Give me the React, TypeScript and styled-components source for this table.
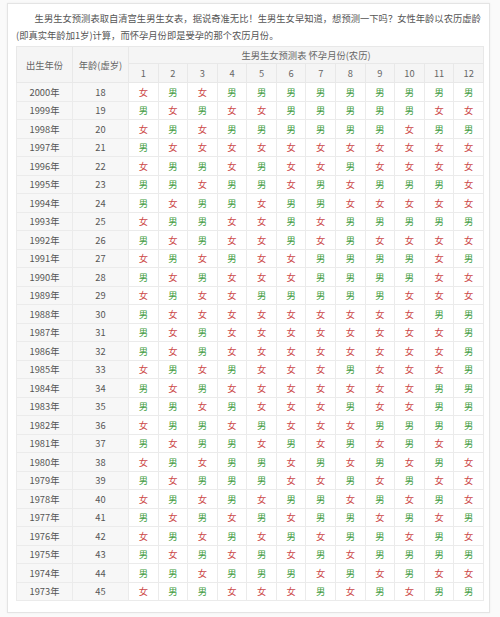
import React from 'react';
import styled, { createGlobalStyle } from 'styled-components';

// Data: F = 女, M = 男, months 1..12
const rows: [number, number, string][] = [
  [2000, 18, 'FMFMMMMMMMMM'],
  [1999, 19, 'MFMFFMMMMMFF'],
  [1998, 20, 'FMFMMMMMMFMM'],
  [1997, 21, 'MFFFFFFFFFFF'],
  [1996, 22, 'FMMFMFFMFFFF'],
  [1995, 23, 'MMFMMFMFMMMF'],
  [1994, 24, 'MFMMFMMFFFFF'],
  [1993, 25, 'FMMFFMFMMMMM'],
  [1992, 26, 'MFMFFMFMFFFF'],
  [1991, 27, 'FMFMFFMMMMFM'],
  [1990, 28, 'MFMFFFMMMMFF'],
  [1989, 29, 'FMFFMMMMMFFF'],
  [1988, 30, 'MFFFFFFFFFMM'],
  [1987, 31, 'MFMFFFFFFFFM'],
  [1986, 32, 'MFMFFFFFFFFM'],
  [1985, 33, 'FMFMFFFMFFFM'],
  [1984, 34, 'MFMFFFFFFFMM'],
  [1983, 35, 'MMFMFFFMFFMM'],
  [1982, 36, 'FMMFMFFFMMMM'],
  [1981, 37, 'MFMMFMFMFMFM'],
  [1980, 38, 'FMFMMFMFMFMF'],
  [1979, 39, 'MFMMMFFMFMFF'],
  [1978, 40, 'FMFMFMMFMFMF'],
  [1977, 41, 'MFMFMFMMFMFM'],
  [1976, 42, 'FMFMFMFMMFMF'],
  [1975, 43, 'MFMFMFMFMMMM'],
  [1974, 44, 'MMFMMMFMFMFF'],
  [1973, 45, 'FMMFFFMFMFMM'],
];

const months = Array.from({ length: 12 }, (_, i) => i + 1);

const GlobalStyle = createGlobalStyle`
  html, body {
    margin: 0;
    padding: 0;
    background: #fafafa;
  }
  body {
    font-family: "Noto Sans CJK SC", "Noto Sans", sans-serif;
  }
`;

const Page = styled.div`
  padding: 3px 10px 4px 7px;
`;

const Card = styled.div`
  box-sizing: border-box;
  width: 483px;
  height: 610px;
  background: #fff;
  border: 1px solid #e4e4e4;
  box-shadow: 0 0 2px rgba(0, 0, 0, 0.06);
  padding: 6px 5px 0 8px;
`;

const Intro = styled.p`
  margin: 0 0 2px;
  font-size: 9.3px;
  line-height: 17px;
  color: #555;
  text-indent: 2em;
  white-space: nowrap;
`;

const Table = styled.table`
  border-collapse: collapse;
  table-layout: fixed;
  width: 468px;
  font-size: 9.3px;
  color: #555;
  border: 1px solid #e6e6e6;
`;

const HeadCell = styled.th<{ $wide?: boolean }>`
  font-weight: normal;
  background: #f5f5f5;
  border: 1px solid #e8e8e8;
  color: #666;
  padding: 0;
  text-align: center;
  width: ${(p) => (p.$wide ? '55px' : 'auto')};
`;

const HeadRow = styled.tr<{ $h: number }>`
  height: ${(p) => p.$h}px;
`;

const Row = styled.tr`
  height: 18.5px;
`;

const LabelCell = styled.td`
  background: #f7f7f7;
  border: 1px solid #ebebeb;
  text-align: center;
  padding: 0;
  color: #555;
`;

const GenderCell = styled.td<{ $boy: boolean }>`
  border: 1px solid #ebebeb;
  text-align: center;
  padding: 0;
  background: #fff;
  color: ${(p) => (p.$boy ? '#3f9c3f' : '#cc4848')};
`;

export default function App() {
  return (
    <>
      <GlobalStyle />
      <Page>
        <Card>
          <Intro>
            生男生女预测表取自清宫生男生女表，据说奇准无比！生男生女早知道，想预测一下吗？女性年龄以农历虚龄
            <br />
            (即真实年龄加1岁)计算，而怀孕月份即是受孕的那个农历月份。
          </Intro>
          <Table>
            <thead>
              <HeadRow $h={17}>
                <HeadCell $wide rowSpan={2}>出生年份</HeadCell>
                <HeadCell $wide rowSpan={2}>年龄(虚岁)</HeadCell>
                <HeadCell colSpan={12}>生男生女预测表 怀孕月份(农历)</HeadCell>
              </HeadRow>
              <HeadRow $h={19}>
                {months.map((m) => (
                  <HeadCell key={m}>{m}</HeadCell>
                ))}
              </HeadRow>
            </thead>
            <tbody>
              {rows.map(([year, age, pattern]) => (
                <Row key={year}>
                  <LabelCell>{year}年</LabelCell>
                  <LabelCell>{age}</LabelCell>
                  {pattern.split('').map((g, i) => (
                    <GenderCell key={i} $boy={g === 'M'}>
                      {g === 'M' ? '男' : '女'}
                    </GenderCell>
                  ))}
                </Row>
              ))}
            </tbody>
          </Table>
        </Card>
      </Page>
    </>
  );
}
